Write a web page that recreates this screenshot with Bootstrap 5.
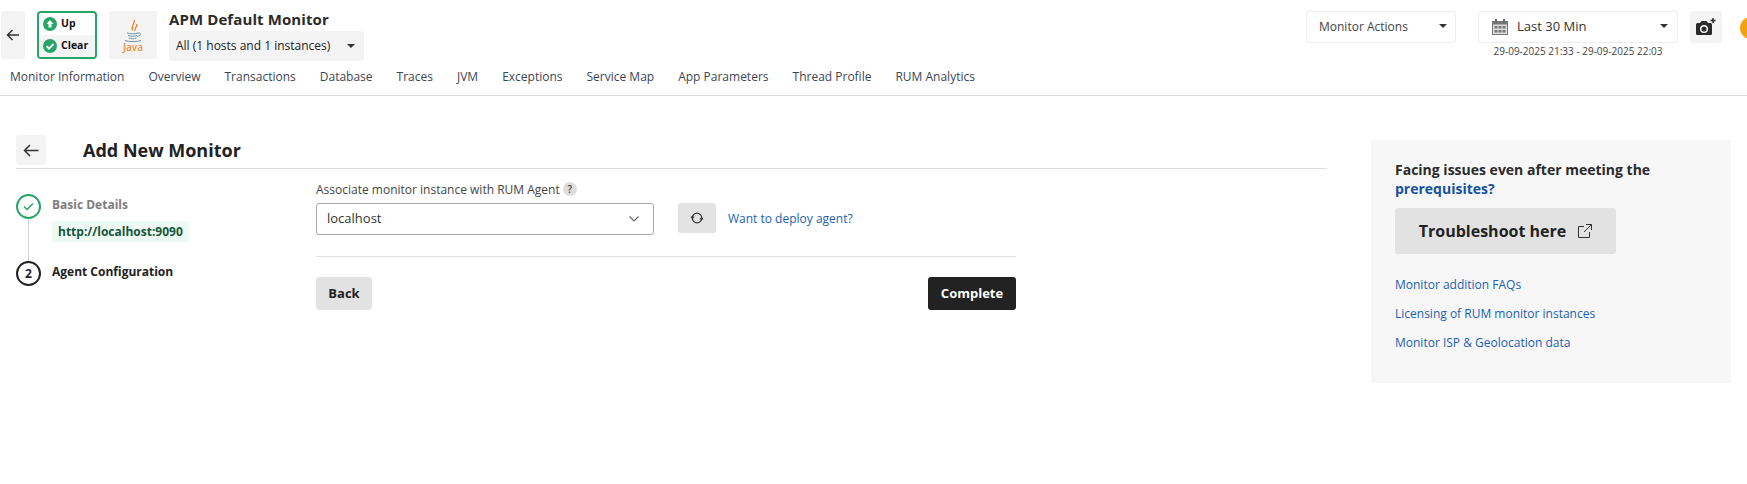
<!DOCTYPE html>
<html lang="en">
<head>
<meta charset="utf-8">
<title>Add New Monitor</title>
<link href="https://cdn.jsdelivr.net/npm/bootstrap@5.3.0/dist/css/bootstrap.min.css" rel="stylesheet">
<style>
html,body{height:484px;overflow:hidden}
body{font-family:"Open Sans",sans-serif;font-size:12px;color:#222;background:#fff}
.top-head{height:96px;border-bottom:1px solid #ddd;position:relative;overflow:hidden}
.head-row{padding:11px 0 0 1px;height:67px}
.tile{background:#f3f3f3;border-radius:3px;height:48px}
.tile-back{width:24px;margin-right:12px}
.status-box{width:60px;height:48px;border:2px solid #27a567;border-radius:4px;font-weight:700;font-size:10.5px;color:#111;overflow:hidden}
.status-line{height:22px;padding-left:4px;gap:4px}
.status-line+.status-line{background:#f4f4f4}
.tile-java{width:48px;margin:0 12px}
.java-word{font-size:10px;line-height:10px;color:#ef8e3a;font-weight:600;margin-top:-1px}
.mon-title{font-size:15px;font-weight:700;line-height:18px;color:#2b2b2b;letter-spacing:.1px}
.mon-select{width:195px;height:30px;background:#f3f3f3;border-radius:3px;padding:0 9px 0 7px;font-size:12px;margin-top:3px}
.caret-dn{width:0;height:0;border-left:4px solid transparent;border-right:4px solid transparent;border-top:4px solid #333}
.right-tools{margin-right:25px}
.act-box{height:32px;border:1px solid #eee;border-radius:3px;font-size:12px;background:#fff}
.act-mon{width:150px;padding:0 8px 0 12px;margin-right:22px;color:#444}
.act-date{width:200px;padding:0 9px 0 13px;color:#333;font-size:13px}
.date-wrap{width:200px;margin-right:12px}
.date-range{font-size:10px;line-height:14px;text-align:center;color:#444;margin-top:1px;white-space:nowrap}
.cam-tile{width:32px;height:32px;background:#f3f3f3;border-radius:3px}
.orange-dot{position:absolute;left:1740px;top:17px;width:22px;height:22px;border-radius:50%;background:#f2a20c}
.tab-row{padding-left:10px;gap:24px;font-size:12px;line-height:20px;color:#3b4654}
.work{padding:39px 16px 0;gap:44px}
.work-main{width:1311px}
.page-head{height:34px;border-bottom:1px solid #ddd}
.back-btn{width:30px;height:30px;background:#f3f3f3;border-radius:3px;flex:none}
.page-title{font-size:18px;font-weight:700;margin:0 0 0 37px;line-height:30px;color:#222}
.steps{width:300px;padding-top:25px}
.step-mark{width:25px;height:25px;border-radius:50%;border:2px solid #222;font-weight:700;font-size:12px;background:#fff;flex:none}
.step-mark.done-mark{border-color:#27a567}
.step-line{width:1px;height:42px;background:#d5d5d5;margin-left:12px}
.step-rail{width:25px;margin-right:11px}
.step-name{font-size:12px;font-weight:700;line-height:16px;padding-top:3px}
.step-name.muted-name{color:#7d7d7d}
.url-chip{display:inline-block;background:#edf9f3;color:#17553b;font-weight:700;font-size:12px;line-height:21px;padding:0 6px;border-radius:2px;margin:8px 0 0 0}
.form-pane{padding-top:12px;width:700px}
.fld-label{font-size:12px;line-height:18px;color:#444}
.q-mark{display:inline-block;width:14px;height:14px;border-radius:50%;background:#ddd;font-size:10px;line-height:14px;text-align:center;font-weight:600;vertical-align:1px}
.sel-box{width:338px;height:32px;border:1px solid #aaa;border-radius:3px;padding:0 14px 0 10px;font-size:13px;color:#333}
.refresh-btn{width:38px;height:30px;background:#e3e3e3;border-radius:3px;margin:0 12px 2px 24px}
.blue-lnk{color:#1a5fb4;text-decoration:none;font-size:12px}
.sep-line{height:1px;background:#e0e0e0;margin:21px 0 20px}
.btn-grey{background:#e2e2e2;color:#222;font-weight:700;font-size:13px;width:56px;height:33px;padding:0;border:0;border-radius:3px}
.btn-dark-x{background:#222;color:#fff;font-weight:700;font-size:13px;width:88px;height:33px;padding:0;border:0;border-radius:3px}
.help-pane{width:360px;height:243px;background:#f7f7f7;padding:21px 24px 0;margin-top:5px}
.help-title{font-size:14px;font-weight:700;line-height:18.500px;color:#2b2b2b}
.help-title a{color:#14529f;text-decoration:none}
.shoot-btn{width:221px;height:46px;background:#e2e2e2;border-radius:3px;font-size:16px;font-weight:700;color:#222;margin:10px 0 22px;gap:12px}
.help-links{gap:11px}
.help-links a{line-height:18px}
</style>
</head>
<body>
<header class="top-head">
  <div class="head-row d-flex align-items-start">
    <div class="tile tile-back d-flex align-items-center justify-content-center">
      <svg width="14" height="12" viewBox="0 0 14 12" fill="none" stroke="#333" stroke-width="1.5"><path d="M13 6H1.5M6.5 1L1.5 6l5 5"/></svg>
    </div>
    <div class="status-box">
      <div class="status-line d-flex align-items-center">
        <svg width="14" height="14" viewBox="0 0 14 14"><circle cx="7" cy="7" r="7" fill="#27a567"/><path d="M7 3L3.5 7H5.5V10.5H8.5V7H10.5Z" fill="#fff"/></svg>
        <span>Up</span>
      </div>
      <div class="status-line d-flex align-items-center">
        <svg width="14" height="14" viewBox="0 0 14 14"><circle cx="7" cy="7" r="7" fill="#27a567"/><path d="M3.6 7.2L6 9.6 10.5 5" fill="none" stroke="#fff" stroke-width="1.8"/></svg>
        <span>Clear</span>
      </div>
    </div>
    <div class="tile tile-java d-flex flex-column align-items-center justify-content-center">
      <svg width="20" height="24" viewBox="0 0 20 24" fill="none">
        <path d="M11 1C13 4.500 7.500 6 9.500 11.500M13.500 5C15 8 11 9 12 12" stroke="#e8842c" stroke-width="1.300"/>
        <path d="M4 14C7 15 12 15 15 14M5 16.500C8 17.500 11 17.500 14 16.500M5.500 19C8 20 11 20 13.500 19M15 14C18.500 13.500 18.500 17 14 17.500M2 21.500C6 23 14 23 18 21.500" stroke="#6d8fa6" stroke-width="1"/>
      </svg>
      <span class="java-word">Java</span>
    </div>
    <div style="margin-top:-1px">
      <div class="mon-title">APM Default Monitor</div>
      <div class="mon-select d-flex align-items-center justify-content-between"><span>All (1 hosts and 1 instances)</span><i class="caret-dn"></i></div>
    </div>
    <div class="right-tools ms-auto d-flex align-items-start">
      <div class="act-box act-mon d-flex align-items-center justify-content-between"><span>Monitor Actions</span><i class="caret-dn" style="margin-top:-3px"></i></div>
      <div class="date-wrap">
        <div class="act-box act-date d-flex align-items-center">
          <svg class="me-2" width="16" height="16" viewBox="0 0 16 16"><rect x="0" y="2" width="16" height="14" fill="#777"/><rect x="1" y="5.500" width="14" height="9.500" fill="#ddd"/><rect x="3" y="0" width="2" height="4" fill="#666"/><rect x="11" y="0" width="2" height="4" fill="#666"/><g fill="#777"><rect x="2.500" y="7" width="3" height="2.500"/><rect x="6.500" y="7" width="3" height="2.500"/><rect x="10.500" y="7" width="3" height="2.500"/><rect x="2.500" y="11" width="3" height="2.500"/><rect x="6.500" y="11" width="3" height="2.500"/><rect x="10.500" y="11" width="3" height="2.500"/></g></svg>
          <span style="margin-left:1px">Last 30 Min</span><i class="caret-dn ms-auto" style="margin-top:-3px"></i>
        </div>
        <div class="date-range">29-09-2025 21:33 - 29-09-2025 22:03</div>
      </div>
      <div class="cam-tile d-flex align-items-center justify-content-center">
        <svg width="20" height="18" viewBox="0 0 20 18"><path d="M0 6.500Q0 5 1.500 5H4L5.500 3H10.500L12 5H14.500Q16 5 16 6.500V16Q16 17 14.500 17H1.500Q0 17 0 16Z" fill="#2b2b2b"/><circle cx="8" cy="11" r="3.300" fill="none" stroke="#fff" stroke-width="1.400"/><path d="M17 0V5M14.500 2.500H19.500" stroke="#2b2b2b" stroke-width="1.500"/></svg>
      </div>
    </div>
  </div>
  <span class="orange-dot"></span>
  <nav class="tab-row d-flex">
    <span>Monitor Information</span><span>Overview</span><span>Transactions</span><span>Database</span><span>Traces</span><span>JVM</span><span>Exceptions</span><span>Service Map</span><span>App Parameters</span><span>Thread Profile</span><span>RUM Analytics</span>
  </nav>
</header>
<main class="work d-flex align-items-start">
  <section class="work-main">
    <div class="page-head d-flex align-items-start">
      <div class="back-btn d-flex align-items-center justify-content-center">
        <svg width="16" height="13" viewBox="0 0 16 13" fill="none" stroke="#333" stroke-width="1.500"><path d="M15.500 6.500H1.500M7 1L1.500 6.500 7 12"/></svg>
      </div>
      <h1 class="page-title">Add New Monitor</h1>
    </div>
    <div class="d-flex">
      <div class="steps">
        <div class="d-flex">
          <div class="step-rail">
            <div class="step-mark done-mark d-flex align-items-center justify-content-center">
              <svg width="11" height="9" viewBox="0 0 11 9" fill="none" stroke="#27a567" stroke-width="1.500"><path d="M1 4.500L4 7.500 10 1.500"/></svg>
            </div>
            <div class="step-line"></div>
          </div>
          <div>
            <div class="step-name muted-name">Basic Details</div>
            <span class="url-chip">http://localhost:9090</span>
          </div>
        </div>
        <div class="d-flex">
          <div class="step-rail"><div class="step-mark d-flex align-items-center justify-content-center">2</div></div>
          <div class="step-name">Agent Configuration</div>
        </div>
      </div>
      <div class="form-pane">
        <div class="fld-label mb-1">Associate monitor instance with RUM Agent <span class="q-mark">?</span></div>
        <div class="d-flex align-items-start">
          <div class="sel-box d-flex align-items-center justify-content-between">
            <span>localhost</span>
            <svg width="10" height="6" viewBox="0 0 10 6" fill="none" stroke="#666" stroke-width="1.200"><path d="M.5.500L5 5 9.500.500"/></svg>
          </div>
          <div class="refresh-btn d-flex align-items-center justify-content-center">
            <svg width="14" height="14" viewBox="0 0 14 14"><circle cx="7" cy="7" r="4.800" fill="none" stroke="#333" stroke-width="1.200"/><path d="M.5 5.500H4.500L2.500 8.500ZM9.500 8.500H13.500L11.500 5.500Z" fill="#333"/></svg>
          </div>
          <a class="blue-lnk align-self-center" href="#" style="margin-top:-1px">Want to deploy agent?</a>
        </div>
        <div class="sep-line"></div>
        <div class="d-flex justify-content-between">
          <button class="btn btn-grey" type="button">Back</button>
          <button class="btn btn-dark-x" type="button">Complete</button>
        </div>
      </div>
    </div>
  </section>
  <aside class="help-pane">
    <div class="help-title">Facing issues even after meeting the<br><a href="#">prerequisites?</a></div>
    <div class="shoot-btn d-flex align-items-center justify-content-center">
      <span>Troubleshoot here</span>
      <svg width="14" height="14" viewBox="0 0 14 14" fill="none" stroke="#333" stroke-width="1"><path d="M11.500 8V13.500H.5V2.500H6M8 .5H13.500V6M13.500 .5L6 8"/></svg>
    </div>
    <div class="help-links d-flex flex-column">
      <a class="blue-lnk" href="#">Monitor addition FAQs</a>
      <a class="blue-lnk" href="#">Licensing of RUM monitor instances</a>
      <a class="blue-lnk" href="#">Monitor ISP &amp; Geolocation data</a>
    </div>
  </aside>
</main>
<script src="https://cdn.jsdelivr.net/npm/bootstrap@5.3.0/dist/js/bootstrap.bundle.min.js"></script>
</body>
</html>
